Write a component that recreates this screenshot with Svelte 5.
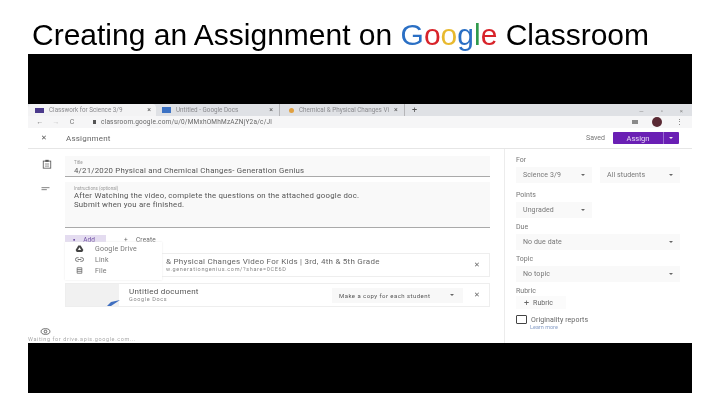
<script>
  const sideTop = [
    { label: 'For', items: [['Science 3/9', 'w76'], ['All students', 'w80']] },
    { label: 'Points', items: [['Ungraded', 'w76']] },
    { label: 'Due', items: [['No due date', 'wfull']] },
    { label: 'Topic', items: [['No topic', 'wfull']] }
  ];
</script>

<div class="page">
  <h1>Creating an Assignment on <span class="b">G</span><span class="r">o</span><span class="y">o</span><span class="b">g</span><span class="g">l</span><span class="r">e</span> Classroom</h1>
  <div class="frame">
    <div class="shot">
      <div class="tabs">
        <div class="tab active">
          <i class="fav purple"></i><span>Classwork for Science 3/9</span><b>×</b>
        </div>
        <div class="tab second">
          <i class="fav blue"></i><span>Untitled - Google Docs</span><b>×</b>
        </div>
        <div class="tab third">
          <i class="fav orange"></i><span>Chemical &amp; Physical Changes Vi</span><b>×</b>
        </div>
        <div class="plus">+</div>
        <div class="win"><span>—</span><span>▫</span><span>×</span></div>
      </div>
      <div class="url">
        <span class="nav">←</span><span class="nav dim">→</span><span class="nav">C</span>
        <i class="lock"></i>
        <span class="addr">classroom.google.com/u/0/MMxhOMhMzAZNjY2a/c/Jl</span>
        <span class="tools"><i class="ext"></i><i class="avatar"></i><i class="dots">⋮</i></span>
      </div>
      <div class="head">
        <span class="close">✕</span>
        <span class="htitle">Assignment</span>
        <span class="saved">Saved</span>
        <div class="assign"><span>Assign</span><em></em><i></i></div>
      </div>
      <div class="body">
        <div class="main">
          <div class="row title-row">
            <svg class="ic" viewBox="0 0 12 12"><rect x="1.5" y="2.5" width="9" height="8.5" fill="none" stroke="#555" stroke-width="1"/><rect x="4" y="1" width="4" height="2.4" fill="#555"/><path d="M3.5 6h5M3.5 8.500h5" stroke="#777"/></svg>
            <div class="field f1">
              <small>Title</small>
              <p>4/21/2020 Physical and Chemical Changes- Generation Genius</p>
            </div>
          </div>
          <div class="row inst-row">
            <svg class="ic lines" viewBox="0 0 12 6"><path d="M0 1h12M0 4h8" stroke="#666" stroke-width="1.200"/></svg>
            <div class="field f2">
              <small>Instructions (optional)</small>
              <p>After Watching the video, complete the questions on the attached google doc.</p>
              <p>Submit when you are finished.</p>
            </div>
          </div>
          <div class="actions">
            <span class="add"><i>▪</i><span>Add</span></span>
            <span class="create"><i>+</i><span>Create</span></span>
          </div>
          <div class="card c1">
            <div class="thumb"></div>
            <div class="ctext">
              <p class="ct">&amp; Physical Changes Video For Kids | 3rd, 4th &amp; 5th Grade</p>
              <p class="cs">w.generationgenius.com/?share=0CE6D</p>
            </div>
            <span class="x">✕</span>
          </div>
          <div class="card c2">
            <div class="thumb doc"><svg viewBox="0 0 14 8"><path d="M1 7 L5 3 L14 1 L8 5 L5 7 Z" fill="#3f6fc0"/></svg></div>
            <div class="ctext">
              <p class="ct dark">Untitled document</p>
              <p class="cs">Google Docs</p>
            </div>
            <span class="copy">Make a copy for each student <i class="caret"></i></span>
            <span class="x">✕</span>
          </div>
          <svg class="eye" viewBox="0 0 12 8"><ellipse cx="6" cy="4" rx="5" ry="3.200" fill="none" stroke="#555"/><circle cx="6" cy="4" r="1.500" fill="none" stroke="#555"/></svg>
          <div class="status">Waiting for drive.apis.google.com...</div>

          <div class="menu">
            <div><svg viewBox="0 0 10 9"><path d="M3.500 0.500h3L10 6.500 8.500 9h-7L0 6.500z" fill="#444"/><path d="M5 3 L3 6.500h4z" fill="#fff"/></svg>Google Drive</div>
            <div><svg viewBox="0 0 10 5"><path d="M4 .5H2.500a2 2 0 000 4H4M6 .5h1.500a2 2 0 010 4H6M3 2.500h4" fill="none" stroke="#666"/></svg>Link</div>
            <div><svg viewBox="0 0 8 9"><path d="M1 1h6v7H1z M1 3.300h6 M1 5.600h6" fill="none" stroke="#666"/></svg>File</div>
          </div>
        </div>
        <aside>
          {#each sideTop as group, i}
            <div class="lbl">{group.label}</div>
            <div class="drops" class:first={i === 0}>
              {#each group.items as item}
                <div class="drop {item[1]}"><span>{item[0]}</span><i class="caret"></i></div>
              {/each}
            </div>
          {/each}
          <div class="lbl rub">Rubric</div>
          <div class="rubric"><b>+</b> Rubric</div>
          <div class="orig"><i></i><span>Originality reports</span></div>
          <div class="learn">Learn more</div>
        </aside>
      </div>
    </div>
  </div>
</div>

<style>
  :global(body) { margin: 0; background: #fff; }
  .page { width: 720px; height: 405px; overflow: hidden; font-family: "Liberation Sans", Arial, sans-serif; background: #fff; }
  h1 { margin: 0; height: 54px; padding: 17px 0 0 32px; box-sizing: border-box; font-size: 30px; line-height: 36px; font-weight: 400; color: #000; white-space: nowrap; filter: blur(.25px); }
  .b { color: #2a6fc4; } .r { color: #d8232a; } .y { color: #e8b92e; } .g { color: #2f9a4c; }
  .frame { margin-left: 28px; width: 664px; height: 339px; background: #000; padding: 50px 0; box-sizing: border-box; }
  .shot { height: 239px; background: #fff; display: flex; flex-direction: column; overflow: hidden; filter: blur(.6px); color: #444; font-family: Roboto, "Liberation Sans", sans-serif; }
  p { margin: 0; }
  .tabs { height: 12px; flex: none; background: #dfe1e5; display: flex; align-items: center; font-size: 6.300px; color: #8a8a8e; }
  .tab { height: 12px; display: flex; align-items: center; gap: 5px; box-sizing: border-box; white-space: nowrap; }
  .tab b { margin-left: auto; font-weight: 400; font-size: 7px; color: #555; }
  .tab.active { width: 128px; padding: 0 5px 0 7px; background: #f3f3f4; border-radius: 4px 4px 0 0; }
  .tab.second { width: 124px; padding: 0 6px 0 6px; border-right: 1px solid #b5b5b8; }
  .tab.third { width: 125px; padding: 0 9px 0 9px; border-right: 1px solid #b5b5b8; }
  .fav { width: 9px; height: 5px; display: block; flex: none; }
  .purple { background: #4b3a8c; } .blue { background: #3c72c4; height: 6px; } .orange { background: #e0a040; border-radius: 50%; width: 5px; height: 5px; }
  .plus { margin-left: 7px; font-size: 9px; color: #555; }
  .win { margin-left: auto; padding-right: 9px; display: flex; gap: 17px; font-size: 6px; color: #888; }
  .url { height: 12px; flex: none; background: #f6f6f7; display: flex; align-items: center; font-size: 6.500px; color: #666; padding-left: 4px; }
  .nav { width: 16px; font-size: 7px; color: #777; text-align: center; }
  .nav.dim { color: #c4c4c4; }
  .lock { width: 3px; height: 4px; background: #555; margin-left: 13px; display: block; }
  .addr { margin-left: 5px; white-space: nowrap; letter-spacing: .2px; }
  .tools { margin-left: auto; display: flex; align-items: center; gap: 14px; padding-right: 9px; }
  .ext { width: 6px; height: 4px; background: #8a8a8a; display: block; }
  .avatar { width: 10px; height: 10px; border-radius: 50%; background: #5a2a34; display: block; }
  .dots { font-style: normal; font-size: 7px; color: #666; }
  .head { height: 20px; flex: none; display: flex; align-items: center; border-bottom: 1px solid #e6e6e6; background: #fff; font-size: 8px; }
  .close { margin-left: 13px; width: 10px; font-size: 7px; color: #555; }
  .htitle { margin-left: 15px; color: #666; letter-spacing: .2px; }
  .saved { margin-left: auto; color: #777; font-size: 7px; }
  .assign { margin: 0 13px 0 8px; width: 66px; height: 12px; background: #6a1fb4; display: flex; align-items: center; color: #e6d8f2; font-size: 7.500px; border-radius: 1px; }
  .assign span { width: 50px; text-align: center; }
  .assign em { width: 1px; height: 12px; background: #9a6bd0; }
  .assign i { margin-left: 5px; width: 0; height: 0; border: 2.500px solid transparent; border-top-color: #eee; border-bottom: 0; }
  .body { flex: 1; display: flex; min-height: 0; }
  .main { width: 476px; flex: none; position: relative; box-sizing: border-box; padding: 7px 0 0 0; }
  .row { display: flex; }
  .ic { width: 10px; height: 10px; margin: 3px 0 0 14px; flex: none; }
  .ic.lines { height: 4px; margin-top: 10px; width: 9px; margin-left: 13px; }
  .title-row .field { margin-left: 13px; }
  .inst-row .field { margin-left: 15px; }
  .field { width: 425px; box-sizing: border-box; background: #f9f9f9; border-bottom: 1px solid #aaa; padding: 4px 0 0 9px; font-size: 7.800px; color: #555; line-height: 9px; letter-spacing: .22px; white-space: nowrap; }
  .field small { display: block; font-size: 4.500px; color: #999; line-height: 6px; letter-spacing: 0; }
  .f1 { height: 21px; }
  .f2 { height: 46px; margin-top: 5px; }
  .f2 small { line-height: 5px; }
  .actions { display: flex; align-items: center; height: 11px; margin: 6px 0 0 37px; font-size: 6.500px; color: #666; }
  .add { width: 41px; height: 9px; background: #e4dcf0; color: #6a4aa0; display: flex; align-items: center; padding-left: 8px; gap: 8px; box-sizing: border-box; white-space: nowrap; }
  .add i, .create i { font-style: normal; }
  .create { margin-left: 18px; display: flex; gap: 8px; white-space: nowrap; letter-spacing: .2px; }
  .card { margin-left: 37px; height: 24px; width: 425px; box-sizing: border-box; display: flex; align-items: center; background: #fff; border: 1px solid #eeeeee; }
  .c1 { margin-top: 8px; }
  .c2 { margin-top: 6px; }
  .thumb { width: 100px; height: 100%; flex: none; background: #fff; position: relative; }
  .thumb.doc { width: 53px; background: #f1f1f1; }
  .thumb svg { position: absolute; right: -1px; bottom: -1px; width: 14px; height: 8px; }
  .c2 .ctext { margin-left: 10px; }
  .ctext { white-space: nowrap; flex: 1; min-width: 0; }
  .ct { font-size: 8px; letter-spacing: .25px; line-height: 8px; color: #666; }
  .ct.dark { color: #555; }
  .cs { font-size: 5.500px; color: #888; line-height: 7px; letter-spacing: .65px; }
  .x { width: 20px; margin-right: 2px; text-align: center; font-size: 7px; color: #666; flex: none; }
  .copy { width: 131px; height: 15px; margin-right: 4px; background: #f8f8f8; display: flex; align-items: center; padding: 0 9px 0 7px; box-sizing: border-box; font-size: 6px; color: #555; white-space: nowrap; letter-spacing: .45px; flex: none; }
  .eye { position: absolute; left: 12px; top: 179px; width: 11px; height: 7px; }
  .status { position: absolute; left: 0; top: 187px; font-size: 5.500px; color: #aaa; white-space: nowrap; letter-spacing: .6px; }
  .menu { position: absolute; left: 37px; top: 93px; width: 97px; height: 38px; box-sizing: border-box; padding-top: 1px; background: #fff; box-shadow: 0 0 2px #e8e8e8; font-size: 7px; color: #777; }
  .menu div { height: 11px; display: flex; align-items: center; white-space: nowrap; letter-spacing: .2px; }
  .menu svg { width: 9px; height: 7px; margin: 0 11px 0 10px; }
  aside { flex: 1; border-left: 1px solid #ececec; padding: 8px 12px 0 11px; box-sizing: border-box; font-size: 7px; color: #666; }
  .lbl { height: 7px; line-height: 7px; color: #777; }
  .drops { display: flex; gap: 8px; margin: 3px 0 6px; }
  .drops.first { margin-bottom: 9px; }
  .drop { height: 16px; background: #f9f9f9; display: flex; align-items: center; padding: 0 7px 0 7px; box-sizing: border-box; white-space: nowrap; color: #777; letter-spacing: .1px; }
  .w76 { width: 76px; } .w80 { width: 80px; } .wfull { width: 164px; }
  .caret { margin-left: auto; width: 0; height: 0; border: 2.500px solid transparent; border-top-color: #666; border-bottom: 0; flex: none; }
  .rub { margin-top: 3px; }
  .rubric { width: 50px; height: 13px; margin-top: 1px; display: flex; align-items: center; gap: 4px; padding-left: 8px; box-sizing: border-box; background: #fbfbfb; }
  .rubric b { font-weight: 400; font-size: 9px; }
  .orig { display: flex; align-items: center; gap: 4px; margin-top: 5px; height: 11px; letter-spacing: .1px; }
  .orig i { width: 9px; height: 7px; border: 1px solid #444; display: block; border-radius: 1px; }
  .learn { margin: -1px 0 0 14px; font-size: 5.500px; color: #8aa0c8; line-height: 6px; }
</style>
